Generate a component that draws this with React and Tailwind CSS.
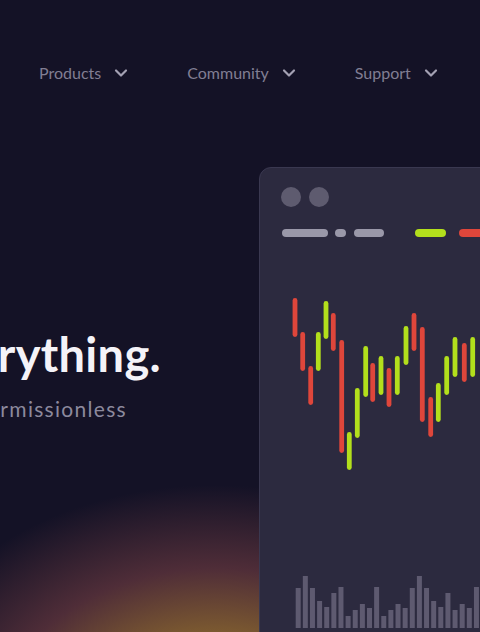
import { ChevronDown } from 'lucide-react';

const navItems = ['Products', 'Community', 'Support'];

// candles: [x, top, bottom, up] in page coords
const candles = [
  [295, 298, 337, 0], [302.7, 332, 371, 0], [310.7, 366, 405, 0], [318.3, 332, 371, 1],
  [326, 301, 339, 1], [333.3, 313, 351, 0], [341.7, 340, 453, 0], [349.3, 432, 470, 1],
  [357.3, 388, 438, 1], [365.7, 346, 397, 1], [372.7, 363, 402, 0], [381, 356, 395, 1],
  [389, 368, 407, 0], [397.3, 356, 395, 1], [406, 326, 365, 1], [414, 313, 351, 0],
  [422.3, 327, 422, 0], [430.7, 397, 437, 0], [438.3, 383, 422, 1], [446.7, 356, 395, 1],
  [455, 337, 377, 1], [464.3, 343, 382, 0], [472.7, 337, 377, 1],
];

const volume = [588, 576, 588, 601, 607, 593, 587, 616, 610, 604, 608, 587, 616, 610, 604, 608, 588, 576, 588, 601, 607, 593, 610, 604, 608, 587, 600];

const PX = 259;
const PY = 250;

function Chart() {
  return (
    <svg width="320" height="385" viewBox="0 0 320 385" className="block">
      {candles.map(([x, top, bottom, up], i) => (
        <line
          key={i}
          x1={x - PX}
          x2={x - PX}
          y1={top - PY + 2.5}
          y2={bottom - PY - 2.5}
          stroke={up ? '#b3df1c' : '#df463b'}
          strokeWidth="4.8"
          strokeLinecap="round"
        />
      ))}
      {volume.map((top, i) => (
        <rect key={i} x={295.7 + i * 7.13 - PX} y={top - PY} width="5" height={628 - top} fill="#5e5a70" />
      ))}
    </svg>
  );
}

export default function App() {
  return (
    <div className="relative h-[632px] w-[480px] overflow-hidden bg-[#141226] font-['Lato',sans-serif]">
      <div className="pointer-events-none absolute inset-0 bg-[radial-gradient(ellipse_330px_245px_at_215px_730px,#b4872f_0%,#82602f_36%,#4f2d38_66%,rgba(20,18,38,0)_100%)]" />
      <div className="relative">
        <nav className="flex h-[146px] items-center gap-[56px] pl-[39px]">
          {navItems.map((item) => (
            <div key={item} className="flex items-center gap-[10px] text-[16px] text-[#817e93]">
              <span>{item}</span>
              <ChevronDown size={20} strokeWidth={2.6} className="text-[#a4a1b3]" />
            </div>
          ))}
        </nav>
        <div className="mt-[21px] flex">
          <div className="w-[259px] shrink-0 pt-[164px]">
            <div className="flex w-[161px] justify-end">
              <h1 className="shrink-0 whitespace-nowrap text-[47px] font-bold leading-none tracking-[0.3px] text-[#f4f3f8]">Everything.</h1>
            </div>
            <div className="mt-[20px] flex w-[127px] justify-end">
              <p className="shrink-0 whitespace-nowrap text-[21px] leading-none tracking-[1.3px] text-[#8c899d]">Open and permissionless</p>
            </div>
          </div>
          <div className="h-[520px] w-[320px] shrink-0 rounded-[12px] border border-[#3a3850] bg-[#2c2a3f]">
            <div className="flex gap-[8px] pl-[21px] pt-[19px]">
              <div className="h-[20px] w-[20px] rounded-full bg-[#5e5b6f]" />
              <div className="h-[20px] w-[20px] rounded-full bg-[#5e5b6f]" />
            </div>
            <div className="mt-[22px] flex items-center pl-[22px]">
              <div className="h-[8px] w-[46px] rounded-full bg-[#9a98a9]" />
              <div className="ml-[7px] h-[8px] w-[11px] rounded-full bg-[#9a98a9]" />
              <div className="ml-[8px] h-[8px] w-[30px] rounded-full bg-[#9a98a9]" />
              <div className="ml-[31px] h-[8px] w-[31px] rounded-full bg-[#b3df1c]" />
              <div className="ml-[13px] h-[8px] w-[31px] rounded-full bg-[#df463b]" />
            </div>
            <div className="mt-[13px] -ml-px">
              <Chart />
            </div>
          </div>
        </div>
      </div>
    </div>
  );
}
